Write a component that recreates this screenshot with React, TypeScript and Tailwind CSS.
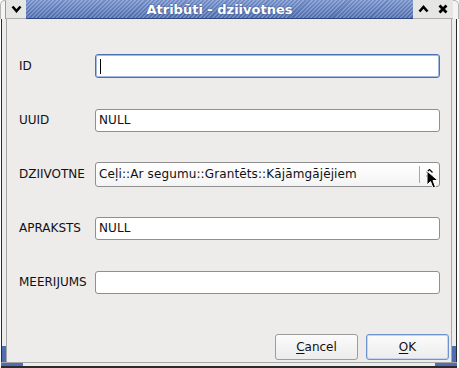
import React from "react"

const rows: { label: string; value: string; kind?: "focus" | "combo" }[] = [
  { label: "ID", value: "", kind: "focus" },
  { label: "UUID", value: "NULL" },
  { label: "DZIIVOTNE", value: "Ceļi::Ar segumu::Grantēts::Kājāmgājējiem", kind: "combo" },
  { label: "APRAKSTS", value: "NULL" },
  { label: "MEERIJUMS", value: "" },
]

function Chevron({ up }: { up?: boolean }) {
  return (
    <svg width="11" height="8" viewBox="0 0 11 8">
      <path
        d={up ? "M1.5 6.5 L5.5 2 L9.5 6.5" : "M1.5 1.5 L5.5 6 L9.5 1.5"}
        fill="none"
        stroke="#000"
        strokeWidth="2.6"
      />
    </svg>
  )
}

function Cross() {
  return (
    <svg width="10" height="10" viewBox="0 0 10 10">
      <path d="M1.5 1.5 L8.5 8.5 M8.5 1.5 L1.5 8.5" stroke="#000" strokeWidth="2.8" />
    </svg>
  )
}

function Field({ value, kind }: { value: string; kind?: "focus" | "combo" }) {
  if (kind === "combo") {
    return (
      <div className="relative h-[25px] rounded-[3px] border border-[#8f8f8f] bg-[linear-gradient(to_bottom,#ffffff,#f4f4f4)] flex items-center">
        <span className="flex-1 pl-[3px] text-[12px] tracking-[0.12px] text-[#111] whitespace-nowrap">{value}</span>
        <div className="w-px h-[17px] bg-[#a8a8a8]" />
        <div className="w-[19px] flex flex-col items-center justify-center gap-[2px]">
          <svg width="7" height="4" viewBox="0 0 7 4"><path d="M0.5 3.5 L3.5 0.5 L6.5 3.5" fill="none" stroke="#000" strokeWidth="1.2" /></svg>
          <svg width="7" height="4" viewBox="0 0 7 4"><path d="M0.5 0.5 L3.5 3.5 L6.5 0.5" fill="none" stroke="#000" strokeWidth="1.2" /></svg>
        </div>
        {/* mouse pointer */}
        <svg className="absolute left-[330px] top-[7px]" width="13" height="20" viewBox="0 0 13 20">
          <path d="M1 1 L1 15 L4.5 11.5 L7 18 L9.5 17 L7 10.5 L12 10.5 Z" fill="#000" stroke="#fff" strokeWidth="1" />
        </svg>
      </div>
    )
  }
  if (kind === "focus") {
    return (
      <div className="h-[24px] rounded-[3px] border border-[#4b70b2] shadow-[inset_0_0_0_1px_#a3bbe2] bg-white flex items-center pl-[4px]">
        <div className="w-px h-[15px] bg-black" />
      </div>
    )
  }
  return (
    <div className="h-[23px] rounded-[3px] border border-[#8f8f8f] bg-white flex items-center pl-[3px] text-[12px] tracking-[0.12px] text-[#111]">
      {value}
    </div>
  )
}

function Button({ label, mn, def }: { label: string; mn: string; def?: boolean }) {
  return (
    <div
      className={`w-[83px] h-[26px] rounded-[3px] border flex items-center justify-center text-[12px] text-[#111] bg-[linear-gradient(to_bottom,#fbfbfb,#ececec)] ${
        def ? "border-[#6d92cc] shadow-[inset_0_0_0_1px_#c5d5ee]" : "border-[#9c9c9c]"
      }`}
    >
      <span>
        <span className="underline underline-offset-2">{mn}</span>
        {label}
      </span>
    </div>
  )
}

export default function App() {
  return (
    <div className="w-[459px] h-[368px] flex flex-col bg-white font-['DejaVu_Sans',sans-serif] overflow-hidden select-none">
      {/* title bar */}
      <div className="h-[19px] flex shrink-0">
        <div className="w-[6px] rounded-tl-[5px] bg-[#f4f4f4] border-l border-t border-[#b5b5b5] border-r border-r-[#9a9a9a]" />
        <div className="w-[20px] bg-[#e6e6e5] border-b border-[#b0b0b0] flex items-center justify-center">
          <Chevron />
        </div>
        <div className="flex-1 relative border-b border-[#2c4781] bg-[repeating-linear-gradient(135deg,#5574b9_0px,#5574b9_1.5px,#7d98d2_1.5px,#7d98d2_2.9px)] flex items-center justify-center">
          <div className="absolute inset-0 bg-[linear-gradient(to_bottom,rgba(255,255,255,0.18),rgba(0,0,0,0.08))]" />
          <span className="relative text-white font-bold text-[13px] leading-none [text-shadow:0_0_2px_#2c4781]">
            Atribūti - dziivotnes
          </span>
        </div>
        <div className="w-[20px] bg-[#e6e6e5] border-b border-[#b0b0b0] flex items-center justify-center">
          <Chevron up />
        </div>
        <div className="w-[20px] bg-[#e6e6e5] border-b border-[#b0b0b0] flex items-center justify-center">
          <Cross />
        </div>
        <div className="w-[6px] rounded-tr-[5px] bg-[#f4f4f4] border-r border-t border-[#b5b5b5]" />
      </div>

      {/* body with side frames */}
      <div className="flex-1 flex min-h-0">
        <div className="w-[6px] flex flex-col border-l border-[#2a2a2a] ml-px border-r border-r-[#a6a6a6]">
          <div className="flex-1 bg-[#ececec]" />
          <div className="h-[16px] bg-[#4e6db4]" />
        </div>
        <div className="flex-1 flex flex-col bg-[#edeceb] pt-[20px]">
          <div className="flex flex-col pl-[12px] pr-[11px]">
            {rows.map((r) => (
              <div key={r.label} className="h-[54px] flex items-center">
                <div className="w-[76px] text-[12px] text-[#111]">{r.label}</div>
                <div className="flex-1">
                  <Field value={r.value} kind={r.kind} />
                </div>
              </div>
            ))}
          </div>
          <div className="mt-auto flex justify-end gap-[8px] pr-[2px] pb-[2px]">
            <Button mn="C" label="ancel" />
            <Button mn="O" label="K" def />
          </div>
        </div>
        <div className="w-[6px] flex flex-col border-l border-[#a6a6a6] border-r border-r-[#2a2a2a] mr-[2px]">
          <div className="flex-1 bg-[#ececec]" />
          <div className="h-[16px] bg-[#4e6db4]" />
        </div>
      </div>

      {/* bottom frame */}
      <div className="h-[6px] flex shrink-0">
        <div className="w-[22px] ml-px border-t border-[#a6a6a6] border-b-2 border-b-[#2a2a2a] bg-[#4e6db4]" />
        <div className="flex-1 border-t border-[#a6a6a6] border-b-2 border-b-[#2a2a2a] bg-[#ececec]" />
        <div className="w-[22px] mr-[2px] border-t border-[#a6a6a6] border-b-2 border-b-[#2a2a2a] bg-[#4e6db4]" />
      </div>
    </div>
  )
}
